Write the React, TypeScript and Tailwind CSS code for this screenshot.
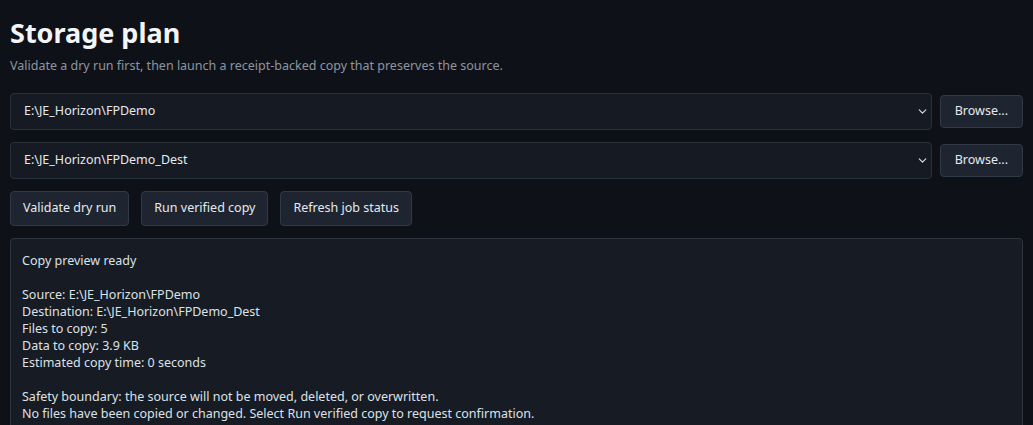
import { ChevronDown } from "lucide-react";

const paths = [
  { value: "E:\\JE_Horizon\\FPDemo" },
  { value: "E:\\JE_Horizon\\FPDemo_Dest" },
];

const actions = ["Validate dry run", "Run verified copy", "Refresh job status"];

const preview = [
  "Copy preview ready",
  "",
  "Source: E:\\JE_Horizon\\FPDemo",
  "Destination: E:\\JE_Horizon\\FPDemo_Dest",
  "Files to copy: 5",
  "Data to copy: 3.9 KB",
  "Estimated copy time: 0 seconds",
  "",
  "Safety boundary: the source will not be moved, deleted, or overwritten.",
  "No files have been copied or changed. Select Run verified copy to request confirmation.",
];

const PathRow = ({ value }: { value: string }) => (
  <div className="flex items-center gap-2">
    {/* Fake select */}
    <div className="flex h-[37px] flex-1 items-center rounded-[4px] border border-[#2a303a] bg-[#151a23] pl-[13px] pr-[2px]">
      <span className="flex-1 text-[12.5px] text-[#e6e9ee]">{value}</span>
      <ChevronDown size={13} strokeWidth={2.2} className="text-[#d7dbe2]" />
    </div>
    <button className="h-[33px] rounded-[4px] border border-[#323946] bg-[#1e2430] px-[14px] text-[12.5px] text-[#e6e9ee]">
      Browse...
    </button>
  </div>
);

export default function App() {
  return (
    <div
      className="min-h-screen bg-[#0e1218] px-[10px] pt-[16px] text-[#dfe3e9]"
      style={{ fontFamily: '"Noto Sans", "Open Sans", sans-serif' }}
    >
      {/* Header */}
      <h1 className="text-[27px] font-bold leading-[34px] text-[#f3f5f8]">Storage plan</h1>
      <p className="mt-[7px] text-[12.5px] leading-[18px] text-[#8d95a1]">
        Validate a dry run first, then launch a receipt-backed copy that preserves the source.
      </p>

      <div className="mt-[18px] flex flex-col gap-3">
        {paths.map((p) => (
          <PathRow key={p.value} value={p.value} />
        ))}

        {/* Actions */}
        <div className="flex gap-3">
          {actions.map((label) => (
            <button
              key={label}
              className="h-[35px] rounded-[4px] border border-[#323946] bg-[#1e2430] px-3 text-[12.5px] text-[#e6e9ee]"
            >
              {label}
            </button>
          ))}
        </div>

        {/* Preview output */}
        <div className="rounded-[4px] border border-[#2e3440] bg-[#161b24] px-[11px] pb-4 pt-[13px]">
          {preview.map((line, i) => (
            <div key={i} className="h-[17px] text-[12.5px] leading-[17px] text-[#dde1e7]">
              {line}
            </div>
          ))}
        </div>
      </div>
    </div>
  );
}
